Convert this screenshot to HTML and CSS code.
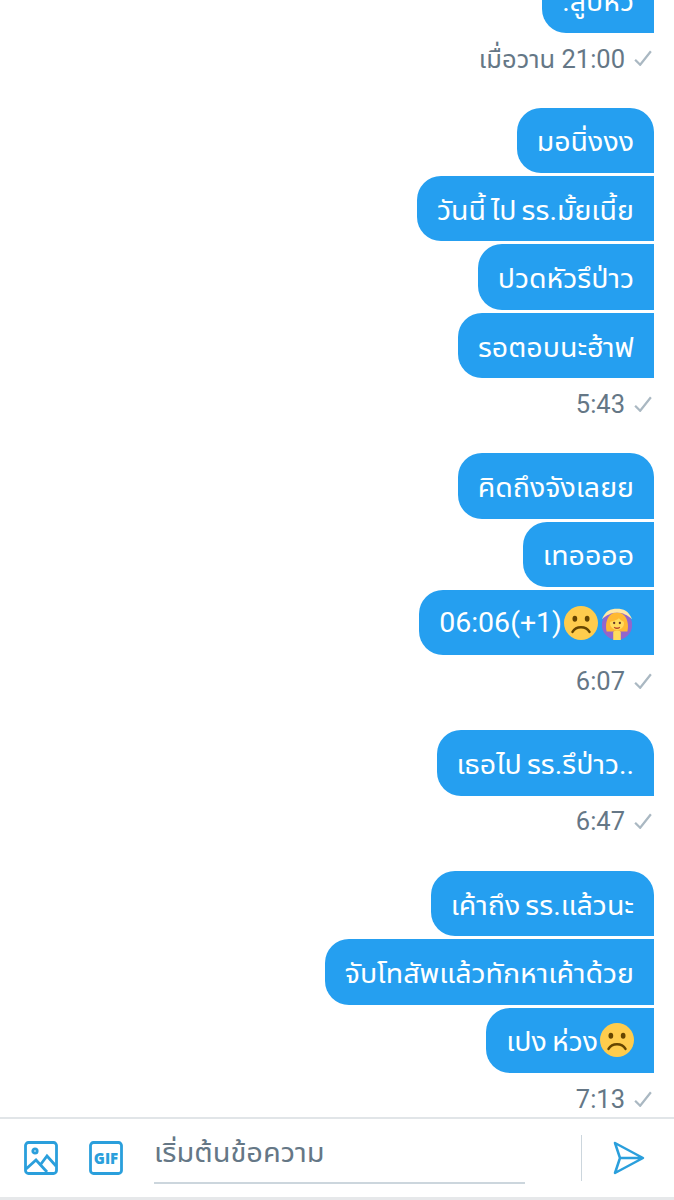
FILE: index.html
```html
<!DOCTYPE html>
<html lang="th">
<head>
  <meta charset="UTF-8">
  <meta name="viewport" content="width=device-width, initial-scale=1.0">
  <title>ข้อความ</title>
  <link rel="stylesheet" href="styles.css">
</head>
<body>
  <div class="screen">
    <main class="messages">
      <!-- yesterday -->
      <section class="group">
        <div class="bubble last">.สูบหัว</div>
        <p class="stamp">เมื่อวาน 21:00 <svg class="check" viewBox="1 2 16 14"><path d="M2 10.500l4.500 4.500L16 3"/></svg></p>
      </section>

      <section class="group">
        <div class="bubble first">มอนิ่งงง</div>
        <div class="bubble">วันนี้ ไป รร.มั้ยเนี้ย</div>
        <div class="bubble">ปวดหัวรึป่าว</div>
        <div class="bubble last">รอตอบนะฮ้าฟ</div>
        <p class="stamp">5:43 <svg class="check" viewBox="1 2 16 14"><path d="M2 10.500l4.500 4.500L16 3"/></svg></p>
      </section>

      <section class="group">
        <div class="bubble first">คิดถึงจังเลยย</div>
        <div class="bubble">เทออออ</div>
        <div class="bubble last">06:06(+1)<svg class="emoji" viewBox="0 0 36 36"><circle cx="18" cy="18" r="18" fill="#ffcc4d"/><ellipse cx="11.500" cy="13.500" rx="2.500" ry="3.200" fill="#664500"/><ellipse cx="24.500" cy="13.500" rx="2.500" ry="3.200" fill="#664500"/><path d="M9 27.500c2-3.500 5-5 9-5s7 1.500 9 5" fill="none" stroke="#664500" stroke-width="2.600" stroke-linecap="round"/></svg><svg class="emoji" viewBox="0 0 36 36"><circle cx="18" cy="20" r="16" fill="#9266cc"/><path d="M7 27c-2-9 1-20 11-20s13 11 11 20z" fill="#ffb932"/><path d="M2 14C6 5 11 3 18 3s12 2 16 11c-5-4-10-7-16-7S7 10 2 14z" fill="#ffe9a8"/><circle cx="18" cy="18" r="7.500" fill="#ffdc5d"/><path d="M10 17c1-5 5-7 8-7s7 2 8 7c-3-1-5-3-6-4-2 2-6 3-10 4z" fill="#ffb932"/><circle cx="15" cy="18" r="1.200" fill="#60352a"/><circle cx="21" cy="18" r="1.200" fill="#60352a"/><path d="M15 22.500c2 1.500 4 1.500 6 0" fill="none" stroke="#b8452c" stroke-width="1.500"/><path d="M14 36v-8c0-1 2-2 4-2s4 1 4 2v8z" fill="#ffdc5d"/></svg></div>
        <p class="stamp">6:07 <svg class="check" viewBox="1 2 16 14"><path d="M2 10.500l4.500 4.500L16 3"/></svg></p>
      </section>

      <section class="group">
        <div class="bubble first last">เธอไป รร.รึป่าว..</div>
        <p class="stamp">6:47 <svg class="check" viewBox="1 2 16 14"><path d="M2 10.500l4.500 4.500L16 3"/></svg></p>
      </section>

      <section class="group">
        <div class="bubble first">เค้าถึง รร.แล้วนะ</div>
        <div class="bubble">จับโทสัพแล้วทักหาเค้าด้วย</div>
        <div class="bubble last">เปง ห่วง<svg class="emoji" viewBox="0 0 36 36"><circle cx="18" cy="18" r="18" fill="#ffcc4d"/><ellipse cx="11.500" cy="13.500" rx="2.500" ry="3.200" fill="#664500"/><ellipse cx="24.500" cy="13.500" rx="2.500" ry="3.200" fill="#664500"/><path d="M9 27.500c2-3.500 5-5 9-5s7 1.500 9 5" fill="none" stroke="#664500" stroke-width="2.600" stroke-linecap="round"/></svg></div>
        <p class="stamp">7:13 <svg class="check" viewBox="1 2 16 14"><path d="M2 10.500l4.500 4.500L16 3"/></svg></p>
      </section>
    </main>

    <footer class="composer">
      <svg class="tool" viewBox="0 0 34 34">
        <rect x="1.500" y="1.500" width="31" height="31" rx="3"/>
        <circle cx="11" cy="10" r="2.200"/>
        <path d="M2 28l10-9 11 12M17 23l6-8 9 10"/>
      </svg>
      <svg class="tool gif" viewBox="0 0 34 34">
        <rect x="1.500" y="1.500" width="31" height="31" rx="3"/>
        <text x="17" y="22.500" text-anchor="middle">GIF</text>
      </svg>
      <div class="input">เริ่มต้นข้อความ</div>
      <div class="divider"></div>
      <svg class="send" viewBox="0 0 32 34">
        <path d="M2 2l28 15L2 32l5-15zM7 17h23"/>
      </svg>
    </footer>
    <div class="base"></div>
  </div>
</body>
</html>
```

FILE: styles.css
```css
html, body {
  margin: 0;
  padding: 0;
  background: #fff;
}
body {
  font-family: Roboto, "Noto Sans Thai UI", "Noto Sans Thai", "Noto Sans", "Noto Sans CJK SC", sans-serif;
  color: #657786;
}
.screen {
  width: 674px;
  height: 1200px;
  display: flex;
  flex-direction: column;
  overflow: hidden;
}
.messages {
  flex: 1;
  min-height: 0;
  display: flex;
  flex-direction: column;
  justify-content: flex-end;
  padding: 0 20px 3px;
  overflow: hidden;
}
.group {
  display: flex;
  flex-direction: column;
  align-items: flex-end;
  gap: 3px;
  flex-shrink: 0;
  margin-top: 34px;
}
.bubble {
  height: 65.4px;
  box-sizing: border-box;
  display: flex;
  align-items: center;
  padding: 0 20px;
  background: #259ff0;
  color: #fff;
  font-size: 28.5px;
  word-spacing: -2px;
  white-space: nowrap;
  border-radius: 24px 0 0 24px;
}
.bubble.first {
  border-top-right-radius: 24px;
}
.emoji {
  width: 34px;
  height: 34px;
  margin-left: 2px;
}
.stamp {
  margin: 6px 0 0;
  height: 32px;
  box-sizing: border-box;
  padding-top: 1px;
  display: flex;
  align-items: center;
  gap: 9px;
  font-size: 25.5px;
  white-space: nowrap;
}
.check {
  width: 18px;
  height: 16px;
  margin-right: 2px;
  fill: none;
  stroke: #aab8c2;
  stroke-width: 2;
}
.composer {
  height: 78px;
  flex-shrink: 0;
  border-top: 2px solid #e1e5e8;
  display: flex;
  align-items: center;
  padding: 0 24px;
}
.tool {
  width: 34px;
  height: 34px;
  margin-right: 31px;
  fill: none;
  stroke: #2a9fdc;
  stroke-width: 2.800;
}
.gif text {
  font-family: "Open Sans", sans-serif;
  font-size: 15px;
  font-weight: 800;
  fill: #2a9fdc;
  stroke: none;
}
.input {
  width: 371px;
  height: 58px;
  margin-top: -6px;
  box-sizing: border-box;
  border-bottom: 2px solid #ccd6dd;
  font-size: 29px;
  line-height: 52px;
  color: #657786;
}
.divider {
  width: 1px;
  height: 46px;
  margin-left: 56px;
  background: #ccd6dd;
}
.send {
  width: 32px;
  height: 34px;
  margin-left: 31px;
  fill: none;
  stroke: #2a9fdc;
  stroke-width: 2.500;
  stroke-linejoin: round;
}
.base {
  height: 3px;
  flex-shrink: 0;
  background: #e6e8ea;
}
```
